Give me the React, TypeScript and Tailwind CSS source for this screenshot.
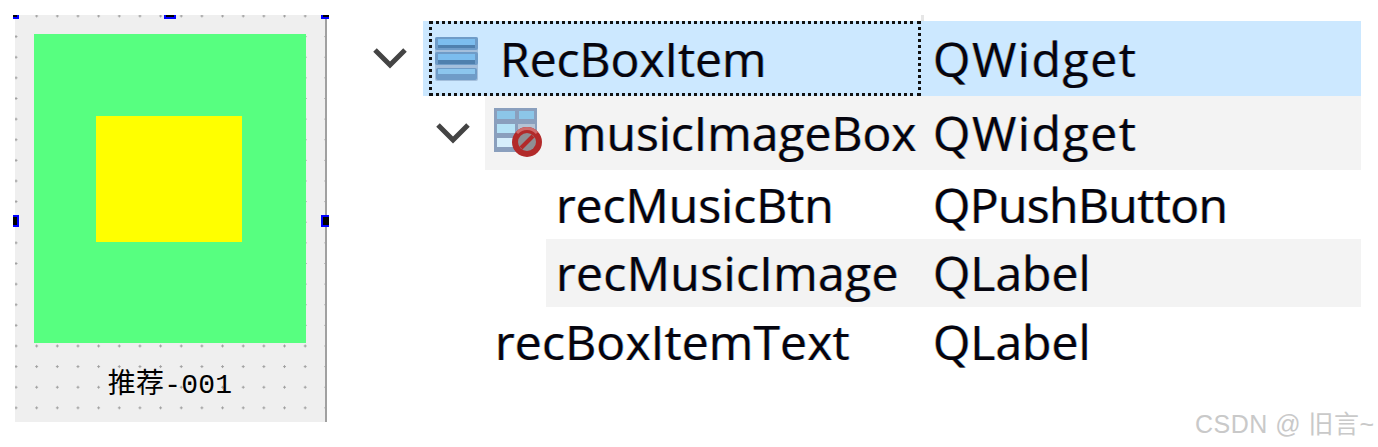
import React from 'react';

const treeFont = "font-['Open_Sans','Noto_Sans',sans-serif] text-[48px] leading-none text-[#05050f] whitespace-nowrap [text-shadow:-0.7px_0_rgba(190,110,0,0.5),0.7px_0_rgba(0,110,220,0.5)]";

function Chevron() {
  return (
    <svg width="36" height="24" viewBox="0 0 36 24" fill="none">
      <path d="M3 4 L18 19 L33 4" stroke="#444444" strokeWidth="5" />
    </svg>
  );
}

function LayoutIcon() {
  return (
    <svg width="44" height="46" viewBox="0 0 44 46">
      <rect x="0" y="1" width="43" height="44" rx="2" fill="#a4bfdc" />
      <rect x="0" y="1" width="43" height="13" rx="2" fill="#6f9cc8" />
      <rect x="3" y="3" width="37" height="6" fill="#7cbdee" />
      <rect x="3" y="9" width="37" height="3" fill="#4f80ae" />
      <rect x="0" y="16" width="43" height="13" rx="2" fill="#6f9cc8" />
      <rect x="3" y="18" width="37" height="6" fill="#7cbdee" />
      <rect x="3" y="24" width="37" height="4" fill="#4f80ae" />
      <rect x="1" y="32" width="41" height="12" rx="2" fill="#6f9cc8" />
      <rect x="3" y="33" width="37" height="5" fill="#8cc6ee" />
    </svg>
  );
}

function BrokenLayoutIcon() {
  return (
    <svg width="50" height="50" viewBox="0 0 50 50">
      <rect x="0" y="0" width="43" height="44" fill="#8a9fbd" />
      <rect x="3" y="3" width="18" height="8" fill="#8cc6e8" />
      <rect x="25" y="3" width="15" height="8" fill="#8cc6e8" />
      <rect x="3" y="16" width="18" height="9" fill="#b4e2f6" />
      <rect x="24" y="16" width="17" height="9" fill="#b5c3d4" />
      <rect x="3" y="30" width="18" height="9" fill="#d6eefb" />
      <circle cx="33" cy="34" r="15" fill="#b22a2a" />
      <circle cx="33" cy="34" r="9" fill="#8f8f94" />
      <path d="M27 40 L39 28" stroke="#b22a2a" strokeWidth="4" />
      <path d="M23 25 A13.5 13.5 0 0 1 43 25" stroke="#cf6b6b" strokeWidth="3" fill="none" />
    </svg>
  );
}

export default function App() {
  return (
    <div className="relative flex h-[447px] w-[1378px] overflow-hidden bg-white">
      {/* Форма */}
      <div className="relative ml-[15px] mt-[15px] h-[407px] w-[312px] shrink-0 border-r-2 border-[#a0a0a0] bg-[#efefef] bg-[radial-gradient(circle,#a0a0a0_1.1px,transparent_1.3px)] bg-[length:20.67px_20.64px] bg-[position:-9.33px_-9.33px] pl-[19px] pt-[19px]">
        <div className="flex h-[309px] w-[272px] items-center justify-center bg-[#57ff80]">
          <div className="mb-[19px] mr-[2px] h-[126px] w-[146px] bg-[#ffff00]" />
        </div>
        <div className="mr-[19px] mt-[26px] text-center font-['Liberation_Mono','Noto_Sans_CJK_SC',monospace] text-[28px] leading-[34px] tracking-[0.2px] text-black">
          推荐-001
        </div>
        <span className="absolute left-[-2px] top-0 h-[4px] w-[6px] border-b-2 border-r-2 border-[#0000ff] bg-black" />
        <span className="absolute left-[149px] top-0 h-[4px] w-[12px] border-x-2 border-b-2 border-[#0000ff] bg-black" />
        <span className="absolute left-[306px] top-0 h-[4px] w-[8px] border-b-2 border-l-2 border-[#0000ff] bg-black" />
        <span className="absolute left-[-2px] top-[200px] h-[12px] w-[6px] border-y-2 border-r-2 border-[#0000ff] bg-black" />
        <span className="absolute left-[306px] top-[200px] h-[12px] w-[8px] border-y-2 border-l-2 border-[#0000ff] bg-black" />
      </div>

      {/* Дерево объектов */}
      <div className="ml-[33px] mt-[21px] flex w-[1001px] shrink-0 flex-col">
        <div className="flex h-[75px]">
          <div className="flex w-[63px] shrink-0 items-center pb-[2px] pl-[12px]">
            <Chevron />
          </div>
          <div className="flex flex-1 bg-[#cce8ff] pl-[6px]">
            <div className="flex w-[492px] items-center border-[3px] border-dotted border-[#111111] pl-[3px]">
              <LayoutIcon />
              <span className={`ml-[21px] ${treeFont}`}>RecBoxItem</span>
            </div>
            <span className={`ml-[12px] flex items-center tracking-[1.6px] ${treeFont}`}>QWidget</span>
          </div>
        </div>

        <div className="flex h-[74px]">
          <div className="flex w-[125px] shrink-0 items-center justify-end pr-[14px]">
            <Chevron />
          </div>
          <div className="flex flex-1 items-center bg-[#f3f3f3] pl-[9px]">
            <BrokenLayoutIcon />
            <span className={`ml-[18px] w-[371px] ${treeFont}`}>musicImageBox</span>
            <span className={`tracking-[1.6px] ${treeFont}`}>QWidget</span>
          </div>
        </div>

        <div className="flex h-[69px] items-center pl-[196px]">
          <span className={`w-[377px] ${treeFont}`}>recMusicBtn</span>
          <span className={`tracking-[-0.6px] ${treeFont}`}>QPushButton</span>
        </div>

        <div className="ml-[186px] flex h-[68px] items-center bg-[#f3f3f3] pl-[10px]">
          <span className={`w-[377px] tracking-[0.4px] ${treeFont}`}>recMusicImage</span>
          <span className={treeFont}>QLabel</span>
        </div>

        <div className="flex h-[69px] items-center pl-[135px]">
          <span className={`w-[438px] tracking-[0.2px] ${treeFont}`}>recBoxItemText</span>
          <span className={treeFont}>QLabel</span>
        </div>
      </div>

      <span className="absolute left-[921px] top-[15px] h-[6px] w-[3px] bg-[#e6e6e6]" />
      <span className="absolute left-[1195px] top-[408px] font-['Liberation_Sans','Noto_Sans_CJK_SC',sans-serif] text-[25px] leading-[32px] tracking-[0.5px] text-[#c9c9c9] whitespace-nowrap">
        CSDN @ 旧言~
      </span>
    </div>
  );
}
